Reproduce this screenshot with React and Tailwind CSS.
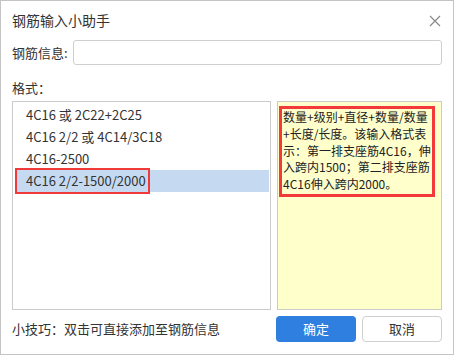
import React from 'react';

const FONT = { fontFamily: '"Microsoft YaHei", "Noto Sans CJK SC", "Noto Sans", sans-serif' };

const FORMATS = [
  '4C16 或 2C22+2C25',
  '4C16 2/2 或 4C14/3C18',
  '4C16-2500',
  '4C16 2/2-1500/2000'
];

// the hint wraps at these points in the original pane
const HINT_LINES = [
  '数量+级别+直径+数量/数量',
  '+长度/长度。该输入格式表',
  '示：第一排支座筋4C16，伸',
  '入跨内1500；第二排支座筋',
  '4C16伸入跨内2000。'
];

export default function App() {
  const selected = 3;

  return (
    <div
      className="w-[454px] h-[355px] bg-white border border-[#c4c4c4] text-[#333] text-[13px] flex flex-col"
      style={FONT}
    >
      {/* title bar */}
      <div className="h-[38px] pl-[11px] pr-[12px] flex items-center justify-between">
        <span className="text-[14px] text-[#333]">钢筋输入小助手</span>
        <svg width="12" height="12" viewBox="0 0 12 12" className="mt-[1px]">
          <path d="M1 1L11 11M11 1L1 11" stroke="#8a8a8a" strokeWidth="1.2" />
        </svg>
      </div>

      {/* input row */}
      <div className="mt-[1px] pl-[11px] pr-[11px] flex items-center">
        <span className="w-[61px] text-[13px]">钢筋信息:</span>
        <div className="flex-1 h-[25px] border border-[#cfcfcf] rounded-[3px] bg-white" />
      </div>

      <div className="mt-[12px] pl-[11px] h-[22px] leading-[22px]">格式：</div>

      {/* two panes */}
      <div className="mt-[2px] pl-[11px] pr-[11px] flex gap-[6px] h-[209px]">
        <div className="w-[259px] shrink-0 border border-[#cbcbcb] bg-white pt-[2px] pl-[4px] pr-[1px]">
          {FORMATS.map((f, i) => (
            <div
              key={f}
              className={`relative h-[22px] leading-[22px] pl-[9px] ${
                i === selected ? 'bg-[#c5daf1]' : ''
              }`}
            >
              {f}
              {i === selected ? (
                <span className="absolute left-[-2px] top-[-2px] w-[135px] h-[26px] border-2 border-[#f03a3a]" />
              ) : null}
            </div>
          ))}
        </div>

        <div className="flex-1 min-w-0 border border-[#cbcbcb] bg-[#ffffcc] pt-[4px] pl-[1px] pr-[6px]">
          <div className="border-[3px] border-[#f23a3a] pl-[1px] pt-[0px] pb-[1px] text-[12px] leading-[16.8px] text-[#222] whitespace-nowrap">
            {HINT_LINES.map((line) => (
              <div key={line}>{line}</div>
            ))}
          </div>
        </div>
      </div>

      {/* footer */}
      <div className="mt-[6px] pl-[11px] pr-[11px] flex items-center">
        <span className="flex-1 text-[13px]">小技巧：双击可直接添加至钢筋信息</span>
        <button
          type="button"
          className="w-[80px] h-[26px] rounded-[4px] bg-[#2e7fe0] text-white text-[13px]"
        >
          确定
        </button>
        <button
          type="button"
          className="ml-[6px] w-[80px] h-[26px] rounded-[4px] border border-[#cfcfcf] bg-white text-[#333] text-[13px]"
        >
          取消
        </button>
      </div>
    </div>
  );
}
